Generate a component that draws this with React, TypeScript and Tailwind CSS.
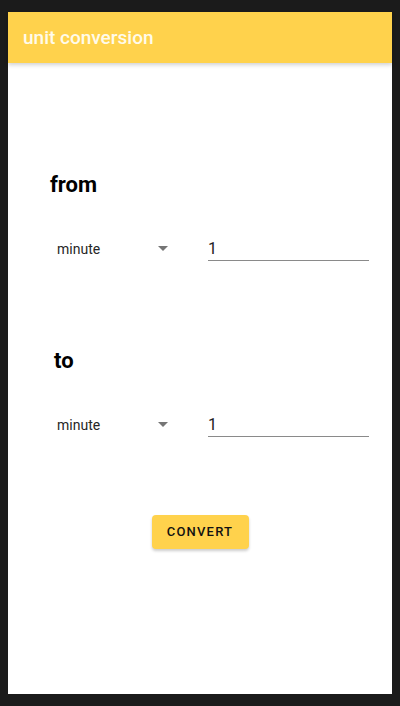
import React from "react";

function Row() {
  return (
    <div className="flex items-end mt-[39px] pl-[49px] pr-[23px]">
      <div className="flex items-center w-[151px] h-[24px] pb-[1px]">
        <span className="text-[14px] leading-[20px] text-[#262626]">minute</span>
        <svg className="ml-[58px]" width="10" height="5" viewBox="0 0 10 5">
          <path d="M0 0 L10 0 L5 5 Z" fill="#757575" />
        </svg>
      </div>
      <div className="flex-1 h-[24px] border-b border-[#8a8a8a] text-[16px] leading-[23px] text-[#212121]">
        1
      </div>
    </div>
  );
}

export default function App() {
  return (
    <div
      className="w-[400px] h-[706px] bg-[#1b1b1b] pt-[12px] px-[8px] pb-[12px]"
      style={{ fontFamily: "Roboto, 'Liberation Sans', sans-serif" }}
    >
      <div className="bg-white h-full flex flex-col">
        <div className="h-[51px] bg-[#ffd24c] flex items-center pl-[15px] pt-[2px] shadow-[0_2px_4px_rgba(0,0,0,0.18)] relative">
          <span className="text-[19px] font-medium text-[#fffbea]">unit conversion</span>
        </div>
        <div className="mt-[109px] pl-[42px] text-[22px] leading-[26px] font-bold text-black">from</div>
        <Row />
        <div className="mt-[87px] pl-[46px] text-[22px] leading-[26px] font-bold text-black">to</div>
        <Row />
        <div className="flex justify-center mt-[78px]">
          <button className="w-[97px] h-[34px] rounded-[4px] bg-[#ffd24c] shadow-[0_2px_3px_rgba(0,0,0,0.2)] text-[13px] font-medium tracking-[1.2px] text-[#111]">
            CONVERT
          </button>
        </div>
      </div>
    </div>
  );
}
